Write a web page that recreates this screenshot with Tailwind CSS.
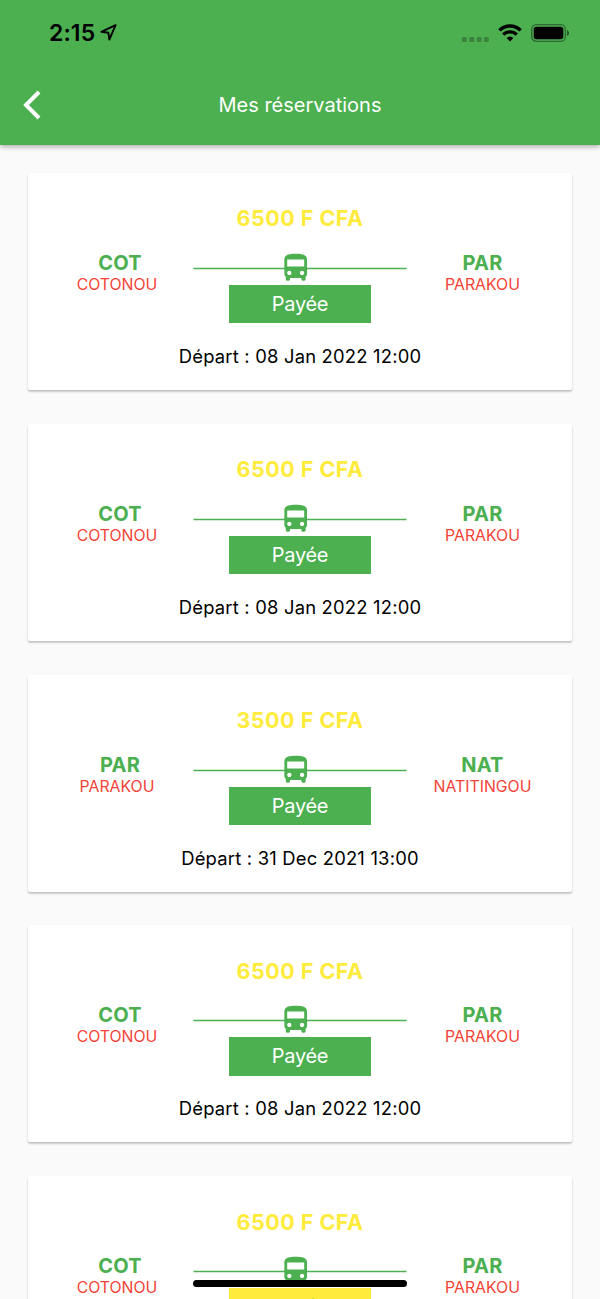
<!DOCTYPE html>
<html lang="fr">
<head>
    <meta charset="UTF-8">
    <meta name="viewport" content="width=device-width, initial-scale=1.0">
    <title>Mes réservations</title>
    <script src="https://cdn.jsdelivr.net/npm/@tailwindcss/browser@4"></script>
    <style>
        body {
            font-family: 'Inter', sans-serif;
        }
    </style>
</head>
<body class="bg-[#fafafa] text-black">
    <div class="relative h-[1299px] overflow-hidden">
        <header class="relative h-[145px] bg-[#4caf50] shadow-[0_2px_5px_rgba(0,0,0,0.3)]">
            <!-- Barre de statut -->
            <div class="flex h-[66px] items-center justify-between pl-[49px] pr-[30px]">
                <div class="flex items-center gap-[6px]">
                    <span class="text-[23px] font-semibold leading-none tracking-[0.1px]">2:15</span>
                    <svg class="-ml-px -mt-[1px] h-[17px] w-[17px]" viewBox="0 0 17 17" fill="none" stroke="black" stroke-width="1.9" stroke-linejoin="round"><path d="M15.6 1.2 1.3 7.8l7.1 1 .9 6.8z"/></svg>
                </div>
                <div class="flex items-center">
                    <svg class="mt-[12px] h-[5px] w-[28px]" viewBox="0 0 28 5" fill="black" fill-opacity=".25"><rect width="5" height="5" rx="1.5"/><rect x="7.3" width="5" height="5" rx="1.5"/><rect x="14.6" width="5" height="5" rx="1.5"/><rect x="21.9" width="5" height="5" rx="1.5"/></svg>
                    <svg class="ml-[8px] h-[18px] w-[24px]" viewBox="0 0 24 18" fill="none" stroke="black" stroke-width="3.4"><path d="M1.4 6.4a15 15 0 0 1 21.2 0"/><path d="M5.3 10.6a9.6 9.6 0 0 1 13.4 0"/><path d="M12 17.6 8.6 14.1a5 5 0 0 1 6.8 0z" fill="black" stroke="none"/></svg>
                    <svg class="ml-[9px] h-[18px] w-[39px]" viewBox="0 0 39 18"><rect x=".7" y=".7" width="33.6" height="16.6" rx="4.6" fill="none" stroke="black" stroke-opacity=".4" stroke-width="1.3"/><rect x="2.7" y="2.7" width="29.6" height="12.6" rx="2.8"/><path d="M36 6v6c1.2-.5 2-1.6 2-3s-.8-2.5-2-3z" fill-opacity=".5"/></svg>
                </div>
            </div>
            <!-- Titre -->
            <div class="grid h-[77px] grid-cols-[100px_1fr_100px] items-center">
                <svg class="ml-[23px] h-[30px] w-[18px]" viewBox="0 0 18 30" fill="none" stroke="white" stroke-width="4"><path d="M16 2 3 15l13 13"/></svg>
                <h1 class="text-center text-[20px] leading-none text-white">Mes réservations</h1>
            </div>
        </header>

        <main class="flex flex-col gap-[33.8px] px-[28px] pt-[28px]" id="reservations">
            <!-- Les cartes sont ajoutées par le script -->
        </main>

        <div class="absolute bottom-[12px] left-[193px] h-[7px] w-[214px] rounded-full bg-black"></div>
    </div>

    <script>
        const reservations = [
            { prix: '6500', de: ['COT', 'COTONOU'], vers: ['PAR', 'PARAKOU'], depart: '08 Jan 2022 12:00', payee: true },
            { prix: '6500', de: ['COT', 'COTONOU'], vers: ['PAR', 'PARAKOU'], depart: '08 Jan 2022 12:00', payee: true },
            { prix: '3500', de: ['PAR', 'PARAKOU'], vers: ['NAT', 'NATITINGOU'], depart: '31 Dec 2021 13:00', payee: true },
            { prix: '6500', de: ['COT', 'COTONOU'], vers: ['PAR', 'PARAKOU'], depart: '08 Jan 2022 12:00', payee: true },
            { prix: '6500', de: ['COT', 'COTONOU'], vers: ['PAR', 'PARAKOU'], depart: '08 Jan 2022 12:00', payee: false }
        ];

        const liste = document.getElementById('reservations');

        reservations.forEach(r => {
            const badge = r.payee ? 'bg-[#4caf50] text-white' : 'bg-[#ffeb3b] text-[#4caf50]';
            const carte = document.createElement('article');
            carte.className = 'h-[217px] shrink-0 rounded-[2px] bg-white pt-[34.4px] text-center shadow-[0_2px_2px_rgba(0,0,0,0.16),0_1px_2px_rgba(0,0,0,0.1)]';
            carte.innerHTML = `
                <p class="h-[43.6px] text-[21.5px] font-bold leading-[23px] tracking-[0.5px] text-[#ffeb3b]">${r.prix} F CFA</p>
                <div class="grid h-[73px] grid-cols-[152px_214px_152px] justify-center">
                    <div>
                        <p class="pl-[6px] text-[20px] font-bold leading-[24px] tracking-[0.2px] text-[#4caf50]">${r.de[0]}</p>
                        <p class="text-[15.8px] leading-[19px] text-[#f44336]">${r.de[1]}</p>
                    </div>
                    <div class="flex flex-col items-center">
                        <svg class="h-[34px] w-[214px] shrink-0" viewBox="0 0 214 34" fill="#4caf50">
                            <path d="M.5 16.7h213v1.5H.5z"/>
                            <path transform="translate(85.7 0) scale(1.417)" d="M4 16c0 .88.39 1.67 1 2.22V20c0 .55.45 1 1 1h1c.55 0 1-.45 1-1v-1h8v1c0 .55.45 1 1 1h1c.55 0 1-.45 1-1v-1.78c.61-.55 1-1.34 1-2.22V6c0-3.500-3.58-4-8-4s-8 .5-8 4v10zm3.500 1c-.83 0-1.500-.67-1.500-1.500S6.670 14 7.500 14s1.500.67 1.500 1.500S8.330 17 7.500 17zm9 0c-.83 0-1.500-.67-1.500-1.500s.67-1.500 1.500-1.500 1.500.67 1.500 1.500-.67 1.500-1.500 1.500zm1.500-6H6V6h12v5z"/>
                        </svg>
                        <p class="h-[38.3px] w-[142px] text-[20px] leading-[38px] tracking-[-0.3px] ${badge}">Payée</p>
                    </div>
                    <div class="-ml-px">
                        <p class="text-[20px] font-bold leading-[24px] tracking-[0.2px] text-[#4caf50]">${r.vers[0]}</p>
                        <p class="text-[15.8px] leading-[19px] text-[#f44336]">${r.vers[1]}</p>
                    </div>
                </div>
                <p class="pt-[20px] text-[18.4px] leading-[24px] tracking-[0.2px]">Départ : ${r.depart}</p>
            `;
            liste.appendChild(carte);
        });
    </script>
</body>
</html>
